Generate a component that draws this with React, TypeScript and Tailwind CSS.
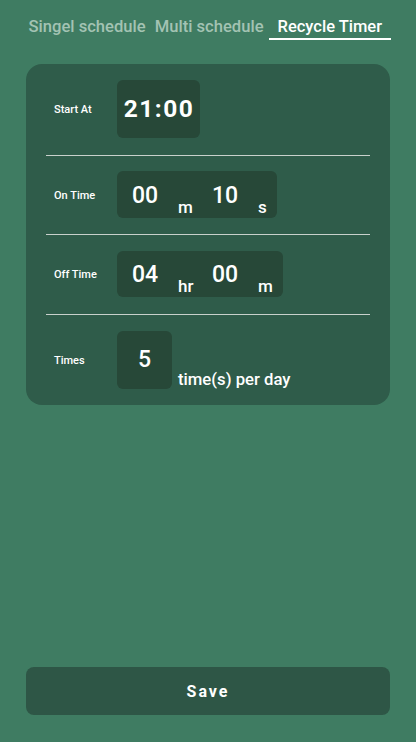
import React from 'react';

const tabs = ['Singel schedule', 'Multi schedule', 'Recycle Timer'];

function Label({ text }: { text: string }) {
  return <div className="w-[63px] pt-[3px] text-[11px] font-medium text-white">{text}</div>;
}

function Group({ value, unit }: { value: string; unit: string }) {
  return (
    <div className="flex w-[80px] items-end last:w-auto">
      <span className="mb-[9px] w-[46px] text-[23px] font-medium leading-none text-white">{value}</span>
      <span className="text-[17px] font-medium leading-none text-white">{unit}</span>
    </div>
  );
}

function DurationBox({ a, au, b, bu, h }: { a: string; au: string; b: string; bu: string; h: string }) {
  return (
    <div className={`flex ${h} items-end rounded-md bg-[#274838] pb-[2px] pl-[15px] pr-[10px]`}>
      <Group value={a} unit={au} />
      <Group value={b} unit={bu} />
    </div>
  );
}

export default function App() {
  return (
    <div
      className="flex min-h-screen flex-col bg-[#3f7c62]"
      style={{ fontFamily: 'Roboto, "Noto Sans", sans-serif' }}
    >
      <div className="flex pl-[24px] pt-[16px]">
        {tabs.map((t, i) =>
          i === 2 ? (
            <div
              key={t}
              className="ml-[1px] border-b-2 border-white px-[8.5px] text-[16.5px] font-medium leading-[22px] text-white"
            >
              {t}
            </div>
          ) : (
            <div key={t} className="px-[4.5px] text-[16.6px] font-medium leading-[22px] text-[#a3c3b3]">
              {t}
            </div>
          )
        )}
      </div>

      <div className="mx-[26px] mt-[24px] rounded-2xl bg-[#2f5c4a] px-[20px]">
        <div className="flex items-center border-b border-[#c9d1cc] pb-[17px] pl-[8px] pt-[16px]">
          <Label text="Start At" />
          <div className="flex h-[58px] w-[83px] items-center justify-center rounded-md bg-[#274838] pl-[1px] text-[24.5px] font-bold tracking-[1.5px] text-white">
            21:00
          </div>
        </div>
        <div className="flex items-center border-b border-[#c9d1cc] pb-[16px] pl-[8px] pt-[15px]">
          <Label text="On Time" />
          <DurationBox a="00" au="m" b="10" bu="s" h="h-[47px]" />
        </div>
        <div className="flex items-center border-b border-[#c9d1cc] pb-[17px] pl-[8px] pt-[16px]">
          <Label text="Off Time" />
          <DurationBox a="04" au="hr" b="00" bu="m" h="h-[46px]" />
        </div>
        <div className="flex items-center pb-[16px] pl-[8px] pt-[16px]">
          <Label text="Times" />
          <div className="flex items-end">
            <div className="flex h-[58px] w-[55px] items-center justify-center rounded-md bg-[#274838] text-[23px] font-medium text-white">
              5
            </div>
            <span className="ml-[6px] text-[16.7px] font-medium leading-none text-white">time(s) per day</span>
          </div>
        </div>
      </div>

      <button className="mx-[26px] mb-[27px] mt-auto h-[48px] rounded-lg bg-[#2e5646] pt-[1px] text-[16px] font-bold tracking-[2px] text-white">
        Save
      </button>
    </div>
  );
}
